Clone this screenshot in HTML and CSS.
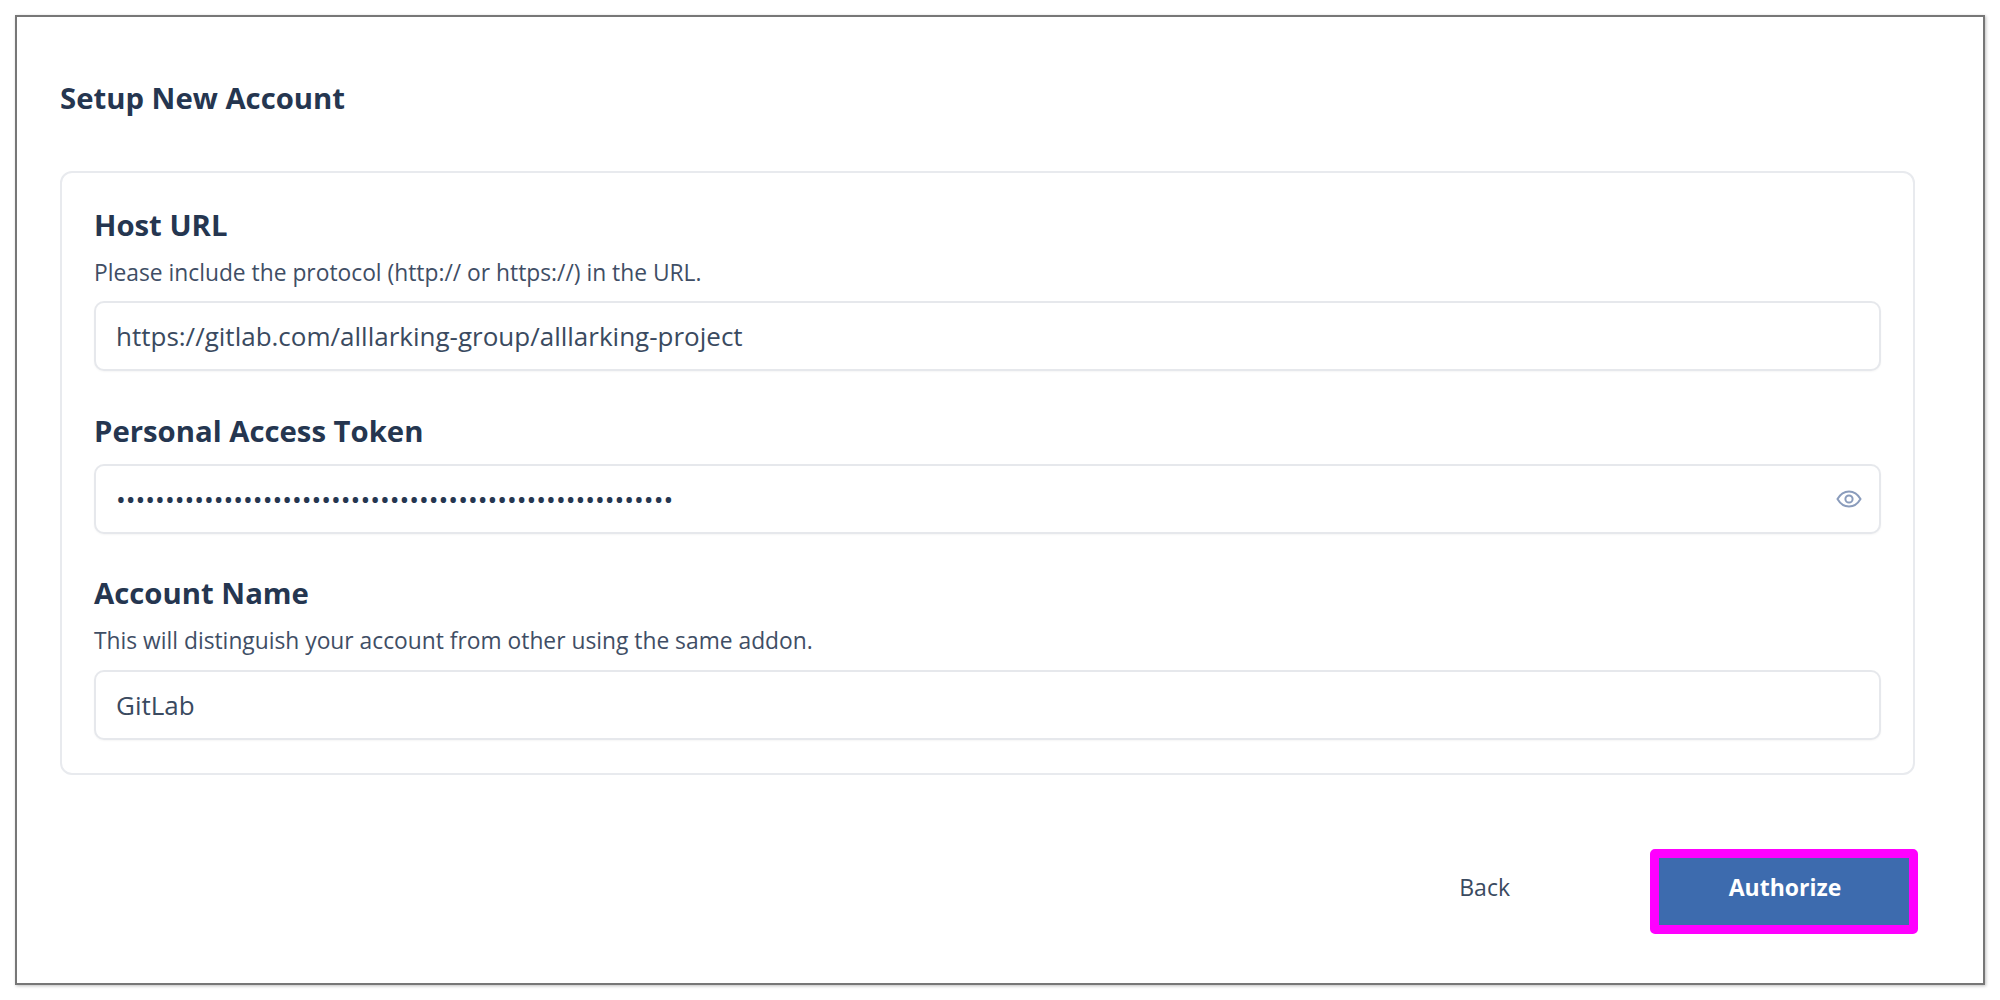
FILE: index.html
```html
<!DOCTYPE html>
<html lang="en">
<head>
<meta charset="utf-8">
<title>Setup New Account</title>
<link rel="stylesheet" href="styles.css">
</head>
<body>
<main class="frame">
  <h1 class="title">Setup New Account</h1>
  <form class="card">
    <div class="field field-host">
      <label class="label">Host URL</label>
      <p class="hint">Please include the protocol (http:// or https://) in the URL.</p>
      <input class="input" type="text" value="https://gitlab.com/alllarking-group/alllarking-project">
    </div>
    <div class="field field-token">
      <label class="label">Personal Access Token</label>
      <div class="input-wrap">
        <input class="input input-secret" type="password" value="abcdefghijabcdefghijabcdefghijabcdefghijabcdefghijabcdefg">
        <svg class="eye" viewBox="0 0 26 20" fill="none" stroke="#8a9cbc" stroke-width="2"><path d="M1.500 10C4.500 4.800 8.500 2.500 13 2.500S21.500 4.800 24.500 10C21.500 15.200 17.500 17.500 13 17.500S4.500 15.200 1.500 10Z"/><circle cx="13" cy="10" r="3.600"/></svg>
      </div>
    </div>
    <div class="field field-name">
      <label class="label">Account Name</label>
      <p class="hint">This will distinguish your account from other using the same addon.</p>
      <input class="input" type="text" value="GitLab">
    </div>
  </form>
  <div class="actions">
    <button class="back" type="button">Back</button>
    <button class="authorize" type="button">Authorize</button>
  </div>
</main>
</body>
</html>
```
FILE: styles.css
```css
* { box-sizing: border-box; }
html, body { margin: 0; height: 100%; background: #fff; }
body {
  padding: 15px;
  font-family: "Open Sans", "Noto Sans", sans-serif;
  color: #253650;
}
.frame {
  width: 1970px;
  height: 970px;
  border: 2px solid #777;
  box-shadow: 1px 1px 3px rgba(0,0,0,.25);
  padding: 62px 44px 0 43px;
  display: flex;
  flex-direction: column;
}
.title {
  margin: 0;
  font-size: 29.3px;
  line-height: 38px;
  font-weight: 700;
  color: #253650;
}
.card {
  margin-top: 54px;
  width: 1855px;
  height: 604px;
  border: 2px solid #e8eaee;
  border-radius: 12px;
  padding: 0 32px;
}
.field { display: flex; flex-direction: column; }
.field-host { padding-top: 33px; }
.field-token { padding-top: 41px; }
.field-name { padding-top: 40px; }
.label {
  font-size: 29.3px;
  line-height: 38px;
  font-weight: 700;
  color: #253650;
}
.hint {
  margin: 15px 0 14px;
  font-size: 22.8px;
  line-height: 28px;
  color: #3f4e65;
}
.field-name .hint { margin-bottom: 15px; }
.field-token .label { margin-bottom: 14px; }
.input-wrap { position: relative; }
.input {
  display: block;
  width: 100%;
  height: 70px;
  border: 2px solid #e6e8ec;
  border-radius: 10px;
  padding: 0 20px;
  font-family: inherit;
  font-size: 26px;
  color: #3a4a60;
  background: #fff;
  outline: none;
  box-shadow: 0 1px 2px rgba(0,0,0,.04);
}
.input-secret { color: #253650; }
.eye {
  position: absolute;
  right: 19px;
  top: 25px;
  width: 26px;
  height: 20px;
}
.actions {
  margin-top: 74px;
  display: flex;
  align-items: center;
  justify-content: flex-end;
  width: 1858px;
}
.back {
  border: 0;
  background: none;
  padding: 0 0 10px;
  font-family: inherit;
  font-size: 23px;
  color: #3a4a60;
  margin-right: 140px;
}
.authorize {
  width: 268px;
  height: 85px;
  border: 9px solid #ff00ff;
  border-radius: 5px;
  background: #3d6bae;
  background-clip: padding-box;
  color: #fff;
  font-family: inherit;
  font-size: 23px;
  font-weight: 700;
  padding: 0 0 10px 2px;
}
```
